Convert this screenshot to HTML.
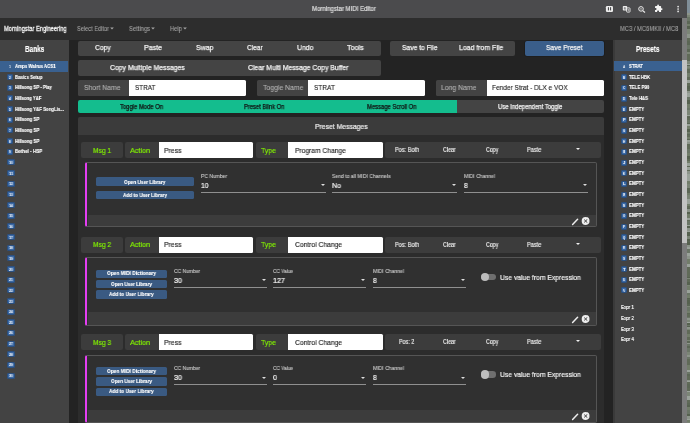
<!DOCTYPE html>
<html><head><meta charset="utf-8">
<style>
*{box-sizing:border-box;margin:0;padding:0}
html,body{width:690px;height:423px;overflow:hidden;background:#232323;font-family:"Liberation Sans",sans-serif;color:#fff;position:relative}
.a{position:absolute}
.t{position:absolute;white-space:nowrap;line-height:1;transform-origin:0 0;will-change:transform}
</style></head><body>
<div class="a" style="left:0.00px;top:0.00px;width:687.00px;height:17.70px;background:#4b4b4d;"></div>
<div class="a" style="left:687.00px;top:0.00px;width:3.00px;height:423.00px;background:#66715f;"></div>
<div class="a" style="left:687.00px;top:0.00px;width:3.00px;height:13.00px;background:#7f8e98;"></div>
<div class="a" style="left:687.00px;top:13.00px;width:3.00px;height:1.50px;background:#8c948a;"></div>
<div class="a" style="left:687.00px;top:14.50px;width:3.00px;height:2.00px;background:#7b8576;"></div>
<div class="a" style="left:687.00px;top:16.50px;width:3.00px;height:4.00px;background:#6a7566;"></div>
<div class="a" style="left:687.00px;top:20.50px;width:3.00px;height:3.00px;background:#5b6655;"></div>
<div class="a" style="left:687.00px;top:23.50px;width:3.00px;height:2.50px;background:#727d6a;"></div>
<div class="a" style="left:687.00px;top:26.00px;width:3.00px;height:3.00px;background:#56614f;"></div>
<div class="a" style="left:687.00px;top:29.00px;width:3.00px;height:1.50px;background:#7b8576;"></div>
<div class="a" style="left:687.00px;top:30.50px;width:3.00px;height:3.00px;background:#7b8576;"></div>
<div class="a" style="left:687.00px;top:33.50px;width:3.00px;height:2.50px;background:#8c948a;"></div>
<div class="a" style="left:687.00px;top:36.00px;width:3.00px;height:1.50px;background:#8c948a;"></div>
<div class="a" style="left:687.00px;top:37.50px;width:3.00px;height:3.00px;background:#606a58;"></div>
<div class="a" style="left:687.00px;top:40.50px;width:3.00px;height:4.00px;background:#5b6655;"></div>
<div class="a" style="left:687.00px;top:44.50px;width:3.00px;height:4.00px;background:#6a7566;"></div>
<div class="a" style="left:687.00px;top:48.50px;width:3.00px;height:1.50px;background:#5b6655;"></div>
<div class="a" style="left:687.00px;top:50.00px;width:3.00px;height:2.00px;background:#5b6655;"></div>
<div class="a" style="left:687.00px;top:52.00px;width:3.00px;height:2.00px;background:#7b8576;"></div>
<div class="a" style="left:687.00px;top:54.00px;width:3.00px;height:3.00px;background:#606a58;"></div>
<div class="a" style="left:687.00px;top:57.00px;width:3.00px;height:4.00px;background:#606a58;"></div>
<div class="a" style="left:687.00px;top:61.00px;width:3.00px;height:2.50px;background:#7b8576;"></div>
<div class="a" style="left:687.00px;top:63.50px;width:3.00px;height:1.50px;background:#9aa29a;"></div>
<div class="a" style="left:687.00px;top:65.00px;width:3.00px;height:1.00px;background:#5b6655;"></div>
<div class="a" style="left:687.00px;top:66.00px;width:3.00px;height:1.50px;background:#7b8576;"></div>
<div class="a" style="left:687.00px;top:67.50px;width:3.00px;height:1.50px;background:#727d6a;"></div>
<div class="a" style="left:687.00px;top:69.00px;width:3.00px;height:4.00px;background:#606a58;"></div>
<div class="a" style="left:687.00px;top:73.00px;width:3.00px;height:4.00px;background:#727d6a;"></div>
<div class="a" style="left:687.00px;top:77.00px;width:3.00px;height:2.50px;background:#606a58;"></div>
<div class="a" style="left:687.00px;top:79.50px;width:3.00px;height:3.00px;background:#9aa29a;"></div>
<div class="a" style="left:687.00px;top:82.50px;width:3.00px;height:3.00px;background:#606a58;"></div>
<div class="a" style="left:687.00px;top:85.50px;width:3.00px;height:3.00px;background:#56614f;"></div>
<div class="a" style="left:687.00px;top:88.50px;width:3.00px;height:2.00px;background:#5b6655;"></div>
<div class="a" style="left:687.00px;top:90.50px;width:3.00px;height:2.00px;background:#8c948a;"></div>
<div class="a" style="left:687.00px;top:92.50px;width:3.00px;height:4.00px;background:#9aa29a;"></div>
<div class="a" style="left:687.00px;top:96.50px;width:3.00px;height:3.00px;background:#6a7566;"></div>
<div class="a" style="left:687.00px;top:99.50px;width:3.00px;height:4.00px;background:#56614f;"></div>
<div class="a" style="left:687.00px;top:103.50px;width:3.00px;height:4.00px;background:#727d6a;"></div>
<div class="a" style="left:687.00px;top:107.50px;width:3.00px;height:2.00px;background:#6a7566;"></div>
<div class="a" style="left:687.00px;top:109.50px;width:3.00px;height:1.00px;background:#7b8576;"></div>
<div class="a" style="left:687.00px;top:110.50px;width:3.00px;height:4.00px;background:#7b8576;"></div>
<div class="a" style="left:687.00px;top:114.50px;width:3.00px;height:1.00px;background:#9aa29a;"></div>
<div class="a" style="left:687.00px;top:115.50px;width:3.00px;height:1.00px;background:#606a58;"></div>
<div class="a" style="left:687.00px;top:116.50px;width:3.00px;height:1.50px;background:#5b6655;"></div>
<div class="a" style="left:687.00px;top:118.00px;width:3.00px;height:2.00px;background:#606a58;"></div>
<div class="a" style="left:687.00px;top:120.00px;width:3.00px;height:2.50px;background:#6a7566;"></div>
<div class="a" style="left:687.00px;top:122.50px;width:3.00px;height:1.00px;background:#5b6655;"></div>
<div class="a" style="left:687.00px;top:123.50px;width:3.00px;height:2.50px;background:#9aa29a;"></div>
<div class="a" style="left:687.00px;top:126.00px;width:3.00px;height:3.00px;background:#727d6a;"></div>
<div class="a" style="left:687.00px;top:129.00px;width:3.00px;height:3.00px;background:#56614f;"></div>
<div class="a" style="left:687.00px;top:132.00px;width:3.00px;height:1.00px;background:#727d6a;"></div>
<div class="a" style="left:687.00px;top:133.00px;width:3.00px;height:1.00px;background:#6a7566;"></div>
<div class="a" style="left:687.00px;top:134.00px;width:3.00px;height:1.00px;background:#5b6655;"></div>
<div class="a" style="left:687.00px;top:135.00px;width:3.00px;height:1.50px;background:#606a58;"></div>
<div class="a" style="left:687.00px;top:136.50px;width:3.00px;height:2.00px;background:#727d6a;"></div>
<div class="a" style="left:687.00px;top:138.50px;width:3.00px;height:1.50px;background:#5b6655;"></div>
<div class="a" style="left:687.00px;top:140.00px;width:3.00px;height:2.00px;background:#9aa29a;"></div>
<div class="a" style="left:687.00px;top:142.00px;width:3.00px;height:2.00px;background:#8c948a;"></div>
<div class="a" style="left:687.00px;top:144.00px;width:3.00px;height:2.50px;background:#606a58;"></div>
<div class="a" style="left:687.00px;top:146.50px;width:3.00px;height:2.50px;background:#606a58;"></div>
<div class="a" style="left:687.00px;top:149.00px;width:3.00px;height:4.00px;background:#6a7566;"></div>
<div class="a" style="left:687.00px;top:153.00px;width:3.00px;height:3.00px;background:#727d6a;"></div>
<div class="a" style="left:687.00px;top:156.00px;width:3.00px;height:2.50px;background:#56614f;"></div>
<div class="a" style="left:687.00px;top:158.50px;width:3.00px;height:2.00px;background:#606a58;"></div>
<div class="a" style="left:687.00px;top:160.50px;width:3.00px;height:2.00px;background:#727d6a;"></div>
<div class="a" style="left:687.00px;top:162.50px;width:3.00px;height:3.00px;background:#9aa29a;"></div>
<div class="a" style="left:687.00px;top:165.50px;width:3.00px;height:1.00px;background:#606a58;"></div>
<div class="a" style="left:687.00px;top:166.50px;width:3.00px;height:3.00px;background:#9aa29a;"></div>
<div class="a" style="left:687.00px;top:169.50px;width:3.00px;height:1.00px;background:#606a58;"></div>
<div class="a" style="left:687.00px;top:170.50px;width:3.00px;height:3.00px;background:#8c948a;"></div>
<div class="a" style="left:687.00px;top:173.50px;width:3.00px;height:1.00px;background:#9aa29a;"></div>
<div class="a" style="left:687.00px;top:174.50px;width:3.00px;height:2.50px;background:#9aa29a;"></div>
<div class="a" style="left:687.00px;top:177.00px;width:3.00px;height:4.00px;background:#9aa29a;"></div>
<div class="a" style="left:687.00px;top:181.00px;width:3.00px;height:3.00px;background:#727d6a;"></div>
<div class="a" style="left:687.00px;top:184.00px;width:3.00px;height:4.00px;background:#7b8576;"></div>
<div class="a" style="left:687.00px;top:188.00px;width:3.00px;height:1.00px;background:#5b6655;"></div>
<div class="a" style="left:687.00px;top:189.00px;width:3.00px;height:4.00px;background:#5b6655;"></div>
<div class="a" style="left:687.00px;top:193.00px;width:3.00px;height:2.00px;background:#727d6a;"></div>
<div class="a" style="left:687.00px;top:195.00px;width:3.00px;height:4.00px;background:#7b8576;"></div>
<div class="a" style="left:687.00px;top:199.00px;width:3.00px;height:2.00px;background:#9aa29a;"></div>
<div class="a" style="left:687.00px;top:201.00px;width:3.00px;height:1.50px;background:#9aa29a;"></div>
<div class="a" style="left:687.00px;top:202.50px;width:3.00px;height:1.50px;background:#9aa29a;"></div>
<div class="a" style="left:687.00px;top:204.00px;width:3.00px;height:2.00px;background:#727d6a;"></div>
<div class="a" style="left:687.00px;top:206.00px;width:3.00px;height:2.00px;background:#606a58;"></div>
<div class="a" style="left:687.00px;top:208.00px;width:3.00px;height:1.00px;background:#5b6655;"></div>
<div class="a" style="left:687.00px;top:209.00px;width:3.00px;height:3.00px;background:#8c948a;"></div>
<div class="a" style="left:687.00px;top:212.00px;width:3.00px;height:2.00px;background:#56614f;"></div>
<div class="a" style="left:687.00px;top:214.00px;width:3.00px;height:4.00px;background:#727d6a;"></div>
<div class="a" style="left:687.00px;top:218.00px;width:3.00px;height:1.50px;background:#9aa29a;"></div>
<div class="a" style="left:687.00px;top:219.50px;width:3.00px;height:1.50px;background:#606a58;"></div>
<div class="a" style="left:687.00px;top:221.00px;width:3.00px;height:4.00px;background:#6a7566;"></div>
<div class="a" style="left:687.00px;top:225.00px;width:3.00px;height:1.00px;background:#9aa29a;"></div>
<div class="a" style="left:687.00px;top:226.00px;width:3.00px;height:2.00px;background:#56614f;"></div>
<div class="a" style="left:687.00px;top:228.00px;width:3.00px;height:2.50px;background:#8c948a;"></div>
<div class="a" style="left:687.00px;top:230.50px;width:3.00px;height:1.00px;background:#9aa29a;"></div>
<div class="a" style="left:687.00px;top:231.50px;width:3.00px;height:4.00px;background:#56614f;"></div>
<div class="a" style="left:687.00px;top:235.50px;width:3.00px;height:3.00px;background:#7b8576;"></div>
<div class="a" style="left:687.00px;top:238.50px;width:3.00px;height:2.00px;background:#56614f;"></div>
<div class="a" style="left:687.00px;top:240.50px;width:3.00px;height:1.00px;background:#5b6655;"></div>
<div class="a" style="left:687.00px;top:241.50px;width:3.00px;height:3.00px;background:#56614f;"></div>
<div class="a" style="left:687.00px;top:244.50px;width:3.00px;height:2.00px;background:#8c948a;"></div>
<div class="a" style="left:687.00px;top:246.50px;width:3.00px;height:2.00px;background:#9aa29a;"></div>
<div class="a" style="left:687.00px;top:248.50px;width:3.00px;height:4.00px;background:#6a7566;"></div>
<div class="a" style="left:687.00px;top:252.50px;width:3.00px;height:3.00px;background:#9aa29a;"></div>
<div class="a" style="left:687.00px;top:255.50px;width:3.00px;height:3.00px;background:#8c948a;"></div>
<div class="a" style="left:687.00px;top:258.50px;width:3.00px;height:2.50px;background:#727d6a;"></div>
<div class="a" style="left:687.00px;top:261.00px;width:3.00px;height:3.00px;background:#727d6a;"></div>
<div class="a" style="left:687.00px;top:264.00px;width:3.00px;height:2.50px;background:#9aa29a;"></div>
<div class="a" style="left:687.00px;top:266.50px;width:3.00px;height:4.00px;background:#606a58;"></div>
<div class="a" style="left:687.00px;top:270.50px;width:3.00px;height:2.00px;background:#606a58;"></div>
<div class="a" style="left:687.00px;top:272.50px;width:3.00px;height:3.00px;background:#606a58;"></div>
<div class="a" style="left:687.00px;top:275.50px;width:3.00px;height:1.00px;background:#606a58;"></div>
<div class="a" style="left:687.00px;top:276.50px;width:3.00px;height:1.50px;background:#56614f;"></div>
<div class="a" style="left:687.00px;top:278.00px;width:3.00px;height:1.00px;background:#7b8576;"></div>
<div class="a" style="left:687.00px;top:279.00px;width:3.00px;height:3.00px;background:#606a58;"></div>
<div class="a" style="left:687.00px;top:282.00px;width:3.00px;height:3.00px;background:#56614f;"></div>
<div class="a" style="left:687.00px;top:285.00px;width:3.00px;height:1.00px;background:#7b8576;"></div>
<div class="a" style="left:687.00px;top:286.00px;width:3.00px;height:4.00px;background:#727d6a;"></div>
<div class="a" style="left:687.00px;top:290.00px;width:3.00px;height:3.00px;background:#9aa29a;"></div>
<div class="a" style="left:687.00px;top:293.00px;width:3.00px;height:1.50px;background:#6a7566;"></div>
<div class="a" style="left:687.00px;top:294.50px;width:3.00px;height:3.00px;background:#727d6a;"></div>
<div class="a" style="left:687.00px;top:297.50px;width:3.00px;height:1.00px;background:#56614f;"></div>
<div class="a" style="left:687.00px;top:298.50px;width:3.00px;height:1.00px;background:#5b6655;"></div>
<div class="a" style="left:687.00px;top:299.50px;width:3.00px;height:4.00px;background:#56614f;"></div>
<div class="a" style="left:687.00px;top:303.50px;width:3.00px;height:2.50px;background:#5b6655;"></div>
<div class="a" style="left:687.00px;top:306.00px;width:3.00px;height:1.00px;background:#7b8576;"></div>
<div class="a" style="left:687.00px;top:307.00px;width:3.00px;height:4.00px;background:#6a7566;"></div>
<div class="a" style="left:687.00px;top:311.00px;width:3.00px;height:1.50px;background:#727d6a;"></div>
<div class="a" style="left:687.00px;top:312.50px;width:3.00px;height:1.50px;background:#5b6655;"></div>
<div class="a" style="left:687.00px;top:314.00px;width:3.00px;height:3.00px;background:#606a58;"></div>
<div class="a" style="left:687.00px;top:317.00px;width:3.00px;height:1.00px;background:#6a7566;"></div>
<div class="a" style="left:687.00px;top:318.00px;width:3.00px;height:2.00px;background:#8c948a;"></div>
<div class="a" style="left:687.00px;top:320.00px;width:3.00px;height:2.00px;background:#7b8576;"></div>
<div class="a" style="left:687.00px;top:322.00px;width:3.00px;height:1.00px;background:#9aa29a;"></div>
<div class="a" style="left:687.00px;top:323.00px;width:3.00px;height:1.50px;background:#56614f;"></div>
<div class="a" style="left:687.00px;top:324.50px;width:3.00px;height:1.00px;background:#6a7566;"></div>
<div class="a" style="left:687.00px;top:325.50px;width:3.00px;height:1.50px;background:#56614f;"></div>
<div class="a" style="left:687.00px;top:327.00px;width:3.00px;height:2.00px;background:#8c948a;"></div>
<div class="a" style="left:687.00px;top:329.00px;width:3.00px;height:1.00px;background:#7b8576;"></div>
<div class="a" style="left:687.00px;top:330.00px;width:3.00px;height:4.00px;background:#606a58;"></div>
<div class="a" style="left:687.00px;top:334.00px;width:3.00px;height:1.00px;background:#727d6a;"></div>
<div class="a" style="left:687.00px;top:335.00px;width:3.00px;height:1.50px;background:#727d6a;"></div>
<div class="a" style="left:687.00px;top:336.50px;width:3.00px;height:3.00px;background:#606a58;"></div>
<div class="a" style="left:687.00px;top:339.50px;width:3.00px;height:1.00px;background:#7b8576;"></div>
<div class="a" style="left:687.00px;top:340.50px;width:3.00px;height:2.00px;background:#5b6655;"></div>
<div class="a" style="left:687.00px;top:342.50px;width:3.00px;height:1.00px;background:#8c948a;"></div>
<div class="a" style="left:687.00px;top:343.50px;width:3.00px;height:1.00px;background:#6a7566;"></div>
<div class="a" style="left:687.00px;top:344.50px;width:3.00px;height:1.00px;background:#6a7566;"></div>
<div class="a" style="left:687.00px;top:345.50px;width:3.00px;height:2.50px;background:#5b6655;"></div>
<div class="a" style="left:687.00px;top:348.00px;width:3.00px;height:4.00px;background:#6a7566;"></div>
<div class="a" style="left:687.00px;top:352.00px;width:3.00px;height:3.00px;background:#7b8576;"></div>
<div class="a" style="left:687.00px;top:355.00px;width:3.00px;height:2.00px;background:#8c948a;"></div>
<div class="a" style="left:687.00px;top:357.00px;width:3.00px;height:2.00px;background:#6a7566;"></div>
<div class="a" style="left:687.00px;top:359.00px;width:3.00px;height:2.00px;background:#606a58;"></div>
<div class="a" style="left:687.00px;top:361.00px;width:3.00px;height:4.00px;background:#606a58;"></div>
<div class="a" style="left:687.00px;top:365.00px;width:3.00px;height:3.00px;background:#727d6a;"></div>
<div class="a" style="left:687.00px;top:368.00px;width:3.00px;height:2.00px;background:#727d6a;"></div>
<div class="a" style="left:687.00px;top:370.00px;width:3.00px;height:1.50px;background:#9aa29a;"></div>
<div class="a" style="left:687.00px;top:371.50px;width:3.00px;height:2.50px;background:#6a7566;"></div>
<div class="a" style="left:687.00px;top:374.00px;width:3.00px;height:1.50px;background:#5b6655;"></div>
<div class="a" style="left:687.00px;top:375.50px;width:3.00px;height:4.00px;background:#606a58;"></div>
<div class="a" style="left:687.00px;top:379.50px;width:3.00px;height:1.00px;background:#8c948a;"></div>
<div class="a" style="left:687.00px;top:380.50px;width:3.00px;height:1.00px;background:#9aa29a;"></div>
<div class="a" style="left:687.00px;top:381.50px;width:3.00px;height:2.50px;background:#606a58;"></div>
<div class="a" style="left:687.00px;top:384.00px;width:3.00px;height:4.00px;background:#5b6655;"></div>
<div class="a" style="left:687.00px;top:388.00px;width:3.00px;height:3.00px;background:#606a58;"></div>
<div class="a" style="left:687.00px;top:391.00px;width:3.00px;height:1.00px;background:#9aa29a;"></div>
<div class="a" style="left:687.00px;top:392.00px;width:3.00px;height:4.00px;background:#7b8576;"></div>
<div class="a" style="left:687.00px;top:396.00px;width:3.00px;height:4.00px;background:#9aa29a;"></div>
<div class="a" style="left:687.00px;top:400.00px;width:3.00px;height:2.50px;background:#606a58;"></div>
<div class="a" style="left:687.00px;top:402.50px;width:3.00px;height:2.50px;background:#5b6655;"></div>
<div class="a" style="left:687.00px;top:405.00px;width:3.00px;height:1.50px;background:#56614f;"></div>
<div class="a" style="left:687.00px;top:406.50px;width:3.00px;height:3.00px;background:#727d6a;"></div>
<div class="a" style="left:687.00px;top:409.50px;width:3.00px;height:4.00px;background:#6a7566;"></div>
<div class="a" style="left:687.00px;top:413.50px;width:3.00px;height:2.50px;background:#56614f;"></div>
<div class="a" style="left:687.00px;top:416.00px;width:3.00px;height:2.50px;background:#8c948a;"></div>
<div class="a" style="left:687.00px;top:418.50px;width:3.00px;height:1.00px;background:#9aa29a;"></div>
<div class="a" style="left:687.00px;top:419.50px;width:3.00px;height:2.00px;background:#727d6a;"></div>
<div class="a" style="left:687.00px;top:421.50px;width:3.00px;height:1.00px;background:#7b8576;"></div>
<div class="a" style="left:687.00px;top:422.50px;width:3.00px;height:4.00px;background:#6a7566;"></div>
<div class="a" style="left:0.00px;top:17.70px;width:682.00px;height:21.90px;background:#2d2d2d;"></div>
<div class="a" style="left:682.00px;top:17.70px;width:5.00px;height:405.30px;background:#7c7c7c;"></div>
<div class="a" style="left:682.00px;top:60.40px;width:5.00px;height:182.20px;background:#c2c2c2;"></div>
<div class="a" style="left:0.00px;top:39.60px;width:68.70px;height:383.40px;background:#434343;"></div>
<div class="a" style="left:68.70px;top:39.60px;width:544.00px;height:383.40px;background:#232323;"></div>
<div class="a" style="left:612.70px;top:39.60px;width:69.30px;height:383.40px;background:#434343;"></div>
<div class="a" style="left:612.70px;top:39.60px;width:2.60px;height:383.40px;background:#3a3a3a;"></div>
<div class="t" style="left:311.50px;top:6px;font-size:6.5px;color:#e6e6e6;transform:scaleX(0.930);-webkit-text-stroke:0.15px currentColor;">Morningstar MIDI Editor</div>
<svg class="a" style="left:600px;top:2px" width="82" height="14" viewBox="600 2 82 14">
<rect x="605.9" y="6" width="7.1" height="5.9" rx="1.2" fill="#ececec"/>
<rect x="607.9" y="7.2" width="1.1" height="3.2" fill="#4b4b4d"/><rect x="610" y="7.2" width="1.1" height="3.2" fill="#4b4b4d"/>
<rect x="622.8" y="6" width="4.4" height="4.6" rx="0.8" fill="#ececec"/>
<path d="M624.3 7.6 h1.3 M624.3 7.6 v1.5 h1.4 v-0.8" stroke="#4b4b4d" stroke-width="0.6" fill="none"/>
<rect x="626.6" y="7.9" width="3.4" height="4.2" rx="0.6" fill="none" stroke="#ececec" stroke-width="0.9"/>
<line x1="628.3" y1="9" x2="628.3" y2="11.2" stroke="#ececec" stroke-width="0.7"/>
<circle cx="641" cy="8.9" r="2.3" fill="none" stroke="#ececec" stroke-width="1"/>
<line x1="642.7" y1="10.6" x2="645" y2="12.5" stroke="#ececec" stroke-width="1.2"/>
<line x1="639.9" y1="8.9" x2="642.1" y2="8.9" stroke="#ececec" stroke-width="0.7"/>
<g transform="translate(654.3,4.2) scale(0.36)"><path d="M20.5 11H19V7c0-1.1-.9-2-2-2h-4V3.5C13 2.12 11.88 1 10.5 1S8 2.12 8 3.5V5H4c-1.1 0-1.99.9-1.99 2v3.8H3.5c1.49 0 2.7 1.21 2.7 2.7s-1.21 2.7-2.7 2.7H2V20c0 1.1.9 2 2 2h3.8v-1.5c0-1.490 1.21-2.7 2.7-2.7 1.49 0 2.7 1.21 2.7 2.7V22H17c1.1 0 2-.9 2-2v-4h1.5c1.38 0 2.5-1.12 2.5-2.5S21.88 11 20.5 11z" fill="#f4f4f4"/></g>
<circle cx="678.1" cy="6.6" r="0.85" fill="#ececec"/><circle cx="678.1" cy="9" r="0.85" fill="#ececec"/><circle cx="678.1" cy="11.4" r="0.85" fill="#ececec"/>
</svg>
<div class="t" style="left:4.10px;top:25px;font-size:7.0px;color:#f2f2f2;transform:scaleX(0.821);-webkit-text-stroke:0.3px currentColor;">Morningstar Engineering</div>
<div class="t" style="left:77.00px;top:25px;font-size:7.0px;color:#a2a2a2;transform:scaleX(0.806);-webkit-text-stroke:0.1px currentColor;">Select Editor</div>
<div class="t" style="left:129.00px;top:25px;font-size:7.0px;color:#a2a2a2;transform:scaleX(0.830);-webkit-text-stroke:0.1px currentColor;">Settings</div>
<div class="t" style="left:170.30px;top:25px;font-size:7.0px;color:#a2a2a2;transform:scaleX(0.826);-webkit-text-stroke:0.1px currentColor;">Help</div>
<svg class="a" style="left:110.10px;top:27px" width="4" height="3" viewBox="0 0 4 3"><path d="M0.2 0.6 L3.8 0.6 L2 2.6 Z" fill="#a8a8a8"/></svg>
<svg class="a" style="left:151.10px;top:27px" width="4" height="3" viewBox="0 0 4 3"><path d="M0.2 0.6 L3.8 0.6 L2 2.6 Z" fill="#a8a8a8"/></svg>
<svg class="a" style="left:183.20px;top:27px" width="4" height="3" viewBox="0 0 4 3"><path d="M0.2 0.6 L3.8 0.6 L2 2.6 Z" fill="#a8a8a8"/></svg>
<div class="t" style="left:619.70px;top:25px;font-size:7.0px;color:#a2a2a2;transform:scaleX(0.828);-webkit-text-stroke:0.1px currentColor;">MC3 / MC6MKII / MC8</div>
<div class="t" style="left:24.50px;top:45px;font-size:8.75px;color:#fff;font-weight:bold;transform:scaleX(0.735);-webkit-text-stroke:0.2px currentColor;">Banks</div>
<div class="a" style="left:0.00px;top:60.80px;width:68.20px;height:10.80px;background:#3a6190;"></div>
<div class="t" style="left:9.30px;top:65px;font-size:4.25px;color:#fff;font-weight:bold;transform:scaleX(0.762);">1</div>
<div class="t" style="left:14.90px;top:64px;font-size:5.5px;color:#fff;font-weight:bold;transform:scaleX(0.797);-webkit-text-stroke:0.15px currentColor;">Amps Walrus ACS1</div>
<div class="a" style="left:7.00px;top:74.16px;width:6.40px;height:6.00px;background:#3d6aa5;border-radius:2.2px;box-shadow:inset 0 0 0 0.8px #264a78"></div>
<div class="t" style="left:9.30px;top:76px;font-size:4.25px;color:#fff;font-weight:bold;transform:scaleX(0.762);">2</div>
<div class="t" style="left:14.90px;top:75px;font-size:5.5px;color:#fff;font-weight:bold;transform:scaleX(0.790);-webkit-text-stroke:0.15px currentColor;">Basics Setup</div>
<div class="a" style="left:7.00px;top:84.82px;width:6.40px;height:6.00px;background:#3d6aa5;border-radius:2.2px;box-shadow:inset 0 0 0 0.8px #264a78"></div>
<div class="t" style="left:9.30px;top:86px;font-size:4.25px;color:#fff;font-weight:bold;transform:scaleX(0.762);">3</div>
<div class="t" style="left:14.90px;top:85px;font-size:5.5px;color:#fff;font-weight:bold;transform:scaleX(0.791);-webkit-text-stroke:0.15px currentColor;">Hillsong SP - Play</div>
<div class="a" style="left:7.00px;top:95.48px;width:6.40px;height:6.00px;background:#3d6aa5;border-radius:2.2px;box-shadow:inset 0 0 0 0.8px #264a78"></div>
<div class="t" style="left:9.30px;top:97px;font-size:4.25px;color:#fff;font-weight:bold;transform:scaleX(0.762);">4</div>
<div class="t" style="left:14.90px;top:96px;font-size:5.5px;color:#fff;font-weight:bold;transform:scaleX(0.777);-webkit-text-stroke:0.15px currentColor;">Hillsong Y&amp;F</div>
<div class="a" style="left:7.00px;top:106.14px;width:6.40px;height:6.00px;background:#3d6aa5;border-radius:2.2px;box-shadow:inset 0 0 0 0.8px #264a78"></div>
<div class="t" style="left:9.30px;top:108px;font-size:4.25px;color:#fff;font-weight:bold;transform:scaleX(0.762);">5</div>
<div class="t" style="left:14.90px;top:107px;font-size:5.5px;color:#fff;font-weight:bold;transform:scaleX(0.788);-webkit-text-stroke:0.15px currentColor;">Hillsong Y&amp;F SongLis...</div>
<div class="a" style="left:7.00px;top:116.80px;width:6.40px;height:6.00px;background:#3d6aa5;border-radius:2.2px;box-shadow:inset 0 0 0 0.8px #264a78"></div>
<div class="t" style="left:9.30px;top:118px;font-size:4.25px;color:#fff;font-weight:bold;transform:scaleX(0.762);">6</div>
<div class="t" style="left:14.90px;top:117px;font-size:5.5px;color:#fff;font-weight:bold;transform:scaleX(0.795);-webkit-text-stroke:0.15px currentColor;">Hillsong SP</div>
<div class="a" style="left:7.00px;top:127.46px;width:6.40px;height:6.00px;background:#3d6aa5;border-radius:2.2px;box-shadow:inset 0 0 0 0.8px #264a78"></div>
<div class="t" style="left:9.30px;top:129px;font-size:4.25px;color:#fff;font-weight:bold;transform:scaleX(0.762);">7</div>
<div class="t" style="left:14.90px;top:128px;font-size:5.5px;color:#fff;font-weight:bold;transform:scaleX(0.795);-webkit-text-stroke:0.15px currentColor;">Hillsong SP</div>
<div class="a" style="left:7.00px;top:138.12px;width:6.40px;height:6.00px;background:#3d6aa5;border-radius:2.2px;box-shadow:inset 0 0 0 0.8px #264a78"></div>
<div class="t" style="left:9.30px;top:140px;font-size:4.25px;color:#fff;font-weight:bold;transform:scaleX(0.762);">8</div>
<div class="t" style="left:14.90px;top:139px;font-size:5.5px;color:#fff;font-weight:bold;transform:scaleX(0.795);-webkit-text-stroke:0.15px currentColor;">Hillsong SP</div>
<div class="a" style="left:7.00px;top:148.78px;width:6.40px;height:6.00px;background:#3d6aa5;border-radius:2.2px;box-shadow:inset 0 0 0 0.8px #264a78"></div>
<div class="t" style="left:9.30px;top:150px;font-size:4.25px;color:#fff;font-weight:bold;transform:scaleX(0.762);">9</div>
<div class="t" style="left:14.90px;top:149px;font-size:5.5px;color:#fff;font-weight:bold;transform:scaleX(0.827);-webkit-text-stroke:0.15px currentColor;">Bethel - HSP</div>
<div class="a" style="left:7.00px;top:159.44px;width:8.40px;height:6.00px;background:#3d6aa5;border-radius:2.2px;box-shadow:inset 0 0 0 0.8px #264a78"></div>
<div class="t" style="left:9.20px;top:161px;font-size:4.25px;color:#fff;font-weight:bold;transform:scaleX(0.846);">10</div>
<div class="a" style="left:7.00px;top:170.10px;width:8.40px;height:6.00px;background:#3d6aa5;border-radius:2.2px;box-shadow:inset 0 0 0 0.8px #264a78"></div>
<div class="t" style="left:9.20px;top:172px;font-size:4.25px;color:#fff;font-weight:bold;transform:scaleX(0.890);">11</div>
<div class="a" style="left:7.00px;top:180.76px;width:8.40px;height:6.00px;background:#3d6aa5;border-radius:2.2px;box-shadow:inset 0 0 0 0.8px #264a78"></div>
<div class="t" style="left:9.20px;top:182px;font-size:4.25px;color:#fff;font-weight:bold;transform:scaleX(0.846);">12</div>
<div class="a" style="left:7.00px;top:191.42px;width:8.40px;height:6.00px;background:#3d6aa5;border-radius:2.2px;box-shadow:inset 0 0 0 0.8px #264a78"></div>
<div class="t" style="left:9.20px;top:193px;font-size:4.25px;color:#fff;font-weight:bold;transform:scaleX(0.846);">13</div>
<div class="a" style="left:7.00px;top:202.08px;width:8.40px;height:6.00px;background:#3d6aa5;border-radius:2.2px;box-shadow:inset 0 0 0 0.8px #264a78"></div>
<div class="t" style="left:9.20px;top:204px;font-size:4.25px;color:#fff;font-weight:bold;transform:scaleX(0.846);">14</div>
<div class="a" style="left:7.00px;top:212.74px;width:8.40px;height:6.00px;background:#3d6aa5;border-radius:2.2px;box-shadow:inset 0 0 0 0.8px #264a78"></div>
<div class="t" style="left:9.20px;top:214px;font-size:4.25px;color:#fff;font-weight:bold;transform:scaleX(0.846);">15</div>
<div class="a" style="left:7.00px;top:223.40px;width:8.40px;height:6.00px;background:#3d6aa5;border-radius:2.2px;box-shadow:inset 0 0 0 0.8px #264a78"></div>
<div class="t" style="left:9.20px;top:225px;font-size:4.25px;color:#fff;font-weight:bold;transform:scaleX(0.846);">16</div>
<div class="a" style="left:7.00px;top:234.06px;width:8.40px;height:6.00px;background:#3d6aa5;border-radius:2.2px;box-shadow:inset 0 0 0 0.8px #264a78"></div>
<div class="t" style="left:9.20px;top:236px;font-size:4.25px;color:#fff;font-weight:bold;transform:scaleX(0.846);">17</div>
<div class="a" style="left:7.00px;top:244.72px;width:8.40px;height:6.00px;background:#3d6aa5;border-radius:2.2px;box-shadow:inset 0 0 0 0.8px #264a78"></div>
<div class="t" style="left:9.20px;top:246px;font-size:4.25px;color:#fff;font-weight:bold;transform:scaleX(0.846);">18</div>
<div class="a" style="left:7.00px;top:255.38px;width:8.40px;height:6.00px;background:#3d6aa5;border-radius:2.2px;box-shadow:inset 0 0 0 0.8px #264a78"></div>
<div class="t" style="left:9.20px;top:257px;font-size:4.25px;color:#fff;font-weight:bold;transform:scaleX(0.846);">19</div>
<div class="a" style="left:7.00px;top:266.04px;width:8.40px;height:6.00px;background:#3d6aa5;border-radius:2.2px;box-shadow:inset 0 0 0 0.8px #264a78"></div>
<div class="t" style="left:9.20px;top:268px;font-size:4.25px;color:#fff;font-weight:bold;transform:scaleX(0.846);">20</div>
<div class="a" style="left:7.00px;top:276.70px;width:8.40px;height:6.00px;background:#3d6aa5;border-radius:2.2px;box-shadow:inset 0 0 0 0.8px #264a78"></div>
<div class="t" style="left:9.20px;top:278px;font-size:4.25px;color:#fff;font-weight:bold;transform:scaleX(0.846);">21</div>
<div class="a" style="left:7.00px;top:287.36px;width:8.40px;height:6.00px;background:#3d6aa5;border-radius:2.2px;box-shadow:inset 0 0 0 0.8px #264a78"></div>
<div class="t" style="left:9.20px;top:289px;font-size:4.25px;color:#fff;font-weight:bold;transform:scaleX(0.846);">22</div>
<div class="a" style="left:7.00px;top:298.02px;width:8.40px;height:6.00px;background:#3d6aa5;border-radius:2.2px;box-shadow:inset 0 0 0 0.8px #264a78"></div>
<div class="t" style="left:9.20px;top:300px;font-size:4.25px;color:#fff;font-weight:bold;transform:scaleX(0.846);">23</div>
<div class="a" style="left:7.00px;top:308.68px;width:8.40px;height:6.00px;background:#3d6aa5;border-radius:2.2px;box-shadow:inset 0 0 0 0.8px #264a78"></div>
<div class="t" style="left:9.20px;top:310px;font-size:4.25px;color:#fff;font-weight:bold;transform:scaleX(0.846);">24</div>
<div class="a" style="left:7.00px;top:319.34px;width:8.40px;height:6.00px;background:#3d6aa5;border-radius:2.2px;box-shadow:inset 0 0 0 0.8px #264a78"></div>
<div class="t" style="left:9.20px;top:321px;font-size:4.25px;color:#fff;font-weight:bold;transform:scaleX(0.846);">25</div>
<div class="a" style="left:7.00px;top:330.00px;width:8.40px;height:6.00px;background:#3d6aa5;border-radius:2.2px;box-shadow:inset 0 0 0 0.8px #264a78"></div>
<div class="t" style="left:9.20px;top:331px;font-size:4.25px;color:#fff;font-weight:bold;transform:scaleX(0.846);">26</div>
<div class="a" style="left:7.00px;top:340.66px;width:8.40px;height:6.00px;background:#3d6aa5;border-radius:2.2px;box-shadow:inset 0 0 0 0.8px #264a78"></div>
<div class="t" style="left:9.20px;top:342px;font-size:4.25px;color:#fff;font-weight:bold;transform:scaleX(0.846);">27</div>
<div class="a" style="left:7.00px;top:351.32px;width:8.40px;height:6.00px;background:#3d6aa5;border-radius:2.2px;box-shadow:inset 0 0 0 0.8px #264a78"></div>
<div class="t" style="left:9.20px;top:353px;font-size:4.25px;color:#fff;font-weight:bold;transform:scaleX(0.846);">28</div>
<div class="a" style="left:7.00px;top:361.98px;width:8.40px;height:6.00px;background:#3d6aa5;border-radius:2.2px;box-shadow:inset 0 0 0 0.8px #264a78"></div>
<div class="t" style="left:9.20px;top:363px;font-size:4.25px;color:#fff;font-weight:bold;transform:scaleX(0.846);">29</div>
<div class="a" style="left:7.00px;top:372.64px;width:8.40px;height:6.00px;background:#3d6aa5;border-radius:2.2px;box-shadow:inset 0 0 0 0.8px #264a78"></div>
<div class="t" style="left:9.20px;top:374px;font-size:4.25px;color:#fff;font-weight:bold;transform:scaleX(0.846);">30</div>
<div class="t" style="left:636.20px;top:45px;font-size:8.75px;color:#fff;font-weight:bold;transform:scaleX(0.746);-webkit-text-stroke:0.2px currentColor;">Presets</div>
<div class="a" style="left:613.80px;top:60.80px;width:68.20px;height:10.70px;background:#3a6190;"></div>
<div class="t" style="left:623.30px;top:65px;font-size:4.25px;color:#fff;font-weight:bold;transform:scaleX(0.717);">A</div>
<div class="t" style="left:629.00px;top:64px;font-size:5.5px;color:#fff;font-weight:bold;transform:scaleX(0.770);-webkit-text-stroke:0.15px currentColor;">STRAT</div>
<div class="a" style="left:620.90px;top:74.26px;width:6.20px;height:6.00px;background:#3d6aa5;border-radius:2.2px;box-shadow:inset 0 0 0 0.8px #264a78"></div>
<div class="t" style="left:623.30px;top:76px;font-size:4.25px;color:#fff;font-weight:bold;transform:scaleX(0.717);">B</div>
<div class="t" style="left:629.00px;top:75px;font-size:5.5px;color:#fff;font-weight:bold;transform:scaleX(0.764);-webkit-text-stroke:0.15px currentColor;">TELE HBK</div>
<div class="a" style="left:620.90px;top:84.92px;width:6.20px;height:6.00px;background:#3d6aa5;border-radius:2.2px;box-shadow:inset 0 0 0 0.8px #264a78"></div>
<div class="t" style="left:623.30px;top:86px;font-size:4.25px;color:#fff;font-weight:bold;transform:scaleX(0.717);">C</div>
<div class="t" style="left:629.00px;top:85px;font-size:5.5px;color:#fff;font-weight:bold;transform:scaleX(0.804);-webkit-text-stroke:0.15px currentColor;">TELE P90</div>
<div class="a" style="left:620.90px;top:95.58px;width:6.20px;height:6.00px;background:#3d6aa5;border-radius:2.2px;box-shadow:inset 0 0 0 0.8px #264a78"></div>
<div class="t" style="left:623.30px;top:97px;font-size:4.25px;color:#fff;font-weight:bold;transform:scaleX(0.717);">D</div>
<div class="t" style="left:629.00px;top:96px;font-size:5.5px;color:#fff;font-weight:bold;transform:scaleX(0.805);-webkit-text-stroke:0.15px currentColor;">Tele H&amp;S</div>
<div class="a" style="left:620.90px;top:106.24px;width:6.20px;height:6.00px;background:#3d6aa5;border-radius:2.2px;box-shadow:inset 0 0 0 0.8px #264a78"></div>
<div class="t" style="left:623.30px;top:108px;font-size:4.25px;color:#fff;font-weight:bold;transform:scaleX(0.776);">E</div>
<div class="t" style="left:629.00px;top:107px;font-size:5.5px;color:#fff;font-weight:bold;transform:scaleX(0.802);-webkit-text-stroke:0.15px currentColor;">EMPTY</div>
<div class="a" style="left:620.90px;top:116.90px;width:6.20px;height:6.00px;background:#3d6aa5;border-radius:2.2px;box-shadow:inset 0 0 0 0.8px #264a78"></div>
<div class="t" style="left:623.30px;top:118px;font-size:4.25px;color:#fff;font-weight:bold;transform:scaleX(0.847);">F</div>
<div class="t" style="left:629.00px;top:117px;font-size:5.5px;color:#fff;font-weight:bold;transform:scaleX(0.802);-webkit-text-stroke:0.15px currentColor;">EMPTY</div>
<div class="a" style="left:620.90px;top:127.56px;width:6.20px;height:6.00px;background:#3d6aa5;border-radius:2.2px;box-shadow:inset 0 0 0 0.8px #264a78"></div>
<div class="t" style="left:623.30px;top:129px;font-size:4.25px;color:#fff;font-weight:bold;transform:scaleX(0.665);">G</div>
<div class="t" style="left:629.00px;top:128px;font-size:5.5px;color:#fff;font-weight:bold;transform:scaleX(0.802);-webkit-text-stroke:0.15px currentColor;">EMPTY</div>
<div class="a" style="left:620.90px;top:138.22px;width:6.20px;height:6.00px;background:#3d6aa5;border-radius:2.2px;box-shadow:inset 0 0 0 0.8px #264a78"></div>
<div class="t" style="left:623.30px;top:140px;font-size:4.25px;color:#fff;font-weight:bold;transform:scaleX(0.717);">H</div>
<div class="t" style="left:629.00px;top:139px;font-size:5.5px;color:#fff;font-weight:bold;transform:scaleX(0.802);-webkit-text-stroke:0.15px currentColor;">EMPTY</div>
<div class="a" style="left:620.90px;top:148.88px;width:6.20px;height:6.00px;background:#3d6aa5;border-radius:2.2px;box-shadow:inset 0 0 0 0.8px #264a78"></div>
<div class="t" style="left:623.30px;top:150px;font-size:4.25px;color:#fff;font-weight:bold;transform:scaleX(1.862);">I</div>
<div class="t" style="left:629.00px;top:149px;font-size:5.5px;color:#fff;font-weight:bold;transform:scaleX(0.802);-webkit-text-stroke:0.15px currentColor;">EMPTY</div>
<div class="a" style="left:620.90px;top:159.54px;width:6.20px;height:6.00px;background:#3d6aa5;border-radius:2.2px;box-shadow:inset 0 0 0 0.8px #264a78"></div>
<div class="t" style="left:623.30px;top:161px;font-size:4.25px;color:#fff;font-weight:bold;transform:scaleX(0.931);">J</div>
<div class="t" style="left:629.00px;top:160px;font-size:5.5px;color:#fff;font-weight:bold;transform:scaleX(0.802);-webkit-text-stroke:0.15px currentColor;">EMPTY</div>
<div class="a" style="left:620.90px;top:170.20px;width:6.20px;height:6.00px;background:#3d6aa5;border-radius:2.2px;box-shadow:inset 0 0 0 0.8px #264a78"></div>
<div class="t" style="left:623.30px;top:172px;font-size:4.25px;color:#fff;font-weight:bold;transform:scaleX(0.717);">K</div>
<div class="t" style="left:629.00px;top:171px;font-size:5.5px;color:#fff;font-weight:bold;transform:scaleX(0.802);-webkit-text-stroke:0.15px currentColor;">EMPTY</div>
<div class="a" style="left:620.90px;top:180.86px;width:6.20px;height:6.00px;background:#3d6aa5;border-radius:2.2px;box-shadow:inset 0 0 0 0.8px #264a78"></div>
<div class="t" style="left:623.30px;top:182px;font-size:4.25px;color:#fff;font-weight:bold;transform:scaleX(0.847);">L</div>
<div class="t" style="left:629.00px;top:181px;font-size:5.5px;color:#fff;font-weight:bold;transform:scaleX(0.802);-webkit-text-stroke:0.15px currentColor;">EMPTY</div>
<div class="a" style="left:620.90px;top:191.52px;width:6.20px;height:6.00px;background:#3d6aa5;border-radius:2.2px;box-shadow:inset 0 0 0 0.8px #264a78"></div>
<div class="t" style="left:623.30px;top:193px;font-size:4.25px;color:#fff;font-weight:bold;transform:scaleX(0.621);">M</div>
<div class="t" style="left:629.00px;top:192px;font-size:5.5px;color:#fff;font-weight:bold;transform:scaleX(0.802);-webkit-text-stroke:0.15px currentColor;">EMPTY</div>
<div class="a" style="left:620.90px;top:202.18px;width:6.20px;height:6.00px;background:#3d6aa5;border-radius:2.2px;box-shadow:inset 0 0 0 0.8px #264a78"></div>
<div class="t" style="left:623.30px;top:204px;font-size:4.25px;color:#fff;font-weight:bold;transform:scaleX(0.717);">N</div>
<div class="t" style="left:629.00px;top:203px;font-size:5.5px;color:#fff;font-weight:bold;transform:scaleX(0.802);-webkit-text-stroke:0.15px currentColor;">EMPTY</div>
<div class="a" style="left:620.90px;top:212.84px;width:6.20px;height:6.00px;background:#3d6aa5;border-radius:2.2px;box-shadow:inset 0 0 0 0.8px #264a78"></div>
<div class="t" style="left:623.30px;top:214px;font-size:4.25px;color:#fff;font-weight:bold;transform:scaleX(0.665);">O</div>
<div class="t" style="left:629.00px;top:213px;font-size:5.5px;color:#fff;font-weight:bold;transform:scaleX(0.802);-webkit-text-stroke:0.15px currentColor;">EMPTY</div>
<div class="a" style="left:620.90px;top:223.50px;width:6.20px;height:6.00px;background:#3d6aa5;border-radius:2.2px;box-shadow:inset 0 0 0 0.8px #264a78"></div>
<div class="t" style="left:623.30px;top:225px;font-size:4.25px;color:#fff;font-weight:bold;transform:scaleX(0.776);">P</div>
<div class="t" style="left:629.00px;top:224px;font-size:5.5px;color:#fff;font-weight:bold;transform:scaleX(0.802);-webkit-text-stroke:0.15px currentColor;">EMPTY</div>
<div class="a" style="left:620.90px;top:234.16px;width:6.20px;height:6.00px;background:#3d6aa5;border-radius:2.2px;box-shadow:inset 0 0 0 0.8px #264a78"></div>
<div class="t" style="left:623.30px;top:236px;font-size:4.25px;color:#fff;font-weight:bold;transform:scaleX(0.665);">Q</div>
<div class="t" style="left:629.00px;top:235px;font-size:5.5px;color:#fff;font-weight:bold;transform:scaleX(0.802);-webkit-text-stroke:0.15px currentColor;">EMPTY</div>
<div class="a" style="left:620.90px;top:244.82px;width:6.20px;height:6.00px;background:#3d6aa5;border-radius:2.2px;box-shadow:inset 0 0 0 0.8px #264a78"></div>
<div class="t" style="left:623.30px;top:246px;font-size:4.25px;color:#fff;font-weight:bold;transform:scaleX(0.717);">R</div>
<div class="t" style="left:629.00px;top:245px;font-size:5.5px;color:#fff;font-weight:bold;transform:scaleX(0.802);-webkit-text-stroke:0.15px currentColor;">EMPTY</div>
<div class="a" style="left:620.90px;top:255.48px;width:6.20px;height:6.00px;background:#3d6aa5;border-radius:2.2px;box-shadow:inset 0 0 0 0.8px #264a78"></div>
<div class="t" style="left:623.30px;top:257px;font-size:4.25px;color:#fff;font-weight:bold;transform:scaleX(0.776);">S</div>
<div class="t" style="left:629.00px;top:256px;font-size:5.5px;color:#fff;font-weight:bold;transform:scaleX(0.802);-webkit-text-stroke:0.15px currentColor;">EMPTY</div>
<div class="a" style="left:620.90px;top:266.14px;width:6.20px;height:6.00px;background:#3d6aa5;border-radius:2.2px;box-shadow:inset 0 0 0 0.8px #264a78"></div>
<div class="t" style="left:623.30px;top:268px;font-size:4.25px;color:#fff;font-weight:bold;transform:scaleX(0.847);">T</div>
<div class="t" style="left:629.00px;top:267px;font-size:5.5px;color:#fff;font-weight:bold;transform:scaleX(0.802);-webkit-text-stroke:0.15px currentColor;">EMPTY</div>
<div class="a" style="left:620.90px;top:276.80px;width:6.20px;height:6.00px;background:#3d6aa5;border-radius:2.2px;box-shadow:inset 0 0 0 0.8px #264a78"></div>
<div class="t" style="left:623.30px;top:278px;font-size:4.25px;color:#fff;font-weight:bold;transform:scaleX(0.717);">U</div>
<div class="t" style="left:629.00px;top:277px;font-size:5.5px;color:#fff;font-weight:bold;transform:scaleX(0.802);-webkit-text-stroke:0.15px currentColor;">EMPTY</div>
<div class="a" style="left:620.90px;top:287.46px;width:6.20px;height:6.00px;background:#3d6aa5;border-radius:2.2px;box-shadow:inset 0 0 0 0.8px #264a78"></div>
<div class="t" style="left:623.30px;top:289px;font-size:4.25px;color:#fff;font-weight:bold;transform:scaleX(0.776);">V</div>
<div class="t" style="left:629.00px;top:288px;font-size:5.5px;color:#fff;font-weight:bold;transform:scaleX(0.802);-webkit-text-stroke:0.15px currentColor;">EMPTY</div>
<div class="t" style="left:620.70px;top:304px;font-size:6.0px;color:#fff;transform:scaleX(0.744);-webkit-text-stroke:0.2px currentColor;">Expr 1</div>
<div class="t" style="left:620.70px;top:315px;font-size:6.0px;color:#fff;transform:scaleX(0.744);-webkit-text-stroke:0.2px currentColor;">Expr 2</div>
<div class="t" style="left:620.70px;top:326px;font-size:6.0px;color:#fff;transform:scaleX(0.744);-webkit-text-stroke:0.2px currentColor;">Expr 3</div>
<div class="t" style="left:620.70px;top:336px;font-size:6.0px;color:#fff;transform:scaleX(0.744);-webkit-text-stroke:0.2px currentColor;">Expr 4</div>
<div class="a" style="left:78.00px;top:40.80px;width:302.50px;height:15.00px;background:#444;border-radius:2px"></div>
<div class="t" style="left:95.20px;top:44px;font-size:7.5px;color:#f2f2f2;transform:scaleX(0.897);-webkit-text-stroke:0.25px currentColor;">Copy</div>
<div class="t" style="left:144.30px;top:44px;font-size:7.5px;color:#f2f2f2;transform:scaleX(0.939);-webkit-text-stroke:0.25px currentColor;">Paste</div>
<div class="t" style="left:195.70px;top:44px;font-size:7.5px;color:#f2f2f2;transform:scaleX(0.933);-webkit-text-stroke:0.25px currentColor;">Swap</div>
<div class="t" style="left:247.00px;top:44px;font-size:7.5px;color:#f2f2f2;transform:scaleX(0.870);-webkit-text-stroke:0.25px currentColor;">Clear</div>
<div class="t" style="left:296.50px;top:44px;font-size:7.5px;color:#f2f2f2;transform:scaleX(0.920);-webkit-text-stroke:0.25px currentColor;">Undo</div>
<div class="t" style="left:346.60px;top:44px;font-size:7.5px;color:#f2f2f2;transform:scaleX(0.954);-webkit-text-stroke:0.25px currentColor;">Tools</div>
<div class="a" style="left:390.40px;top:40.80px;width:124.20px;height:15.00px;background:#444;border-radius:2px"></div>
<div class="t" style="left:401.90px;top:44px;font-size:7.5px;color:#f2f2f2;transform:scaleX(0.896);-webkit-text-stroke:0.25px currentColor;">Save to File</div>
<div class="t" style="left:459.30px;top:44px;font-size:7.5px;color:#f2f2f2;transform:scaleX(0.922);-webkit-text-stroke:0.25px currentColor;">Load from File</div>
<div class="a" style="left:525.00px;top:40.90px;width:79.00px;height:14.90px;background:#3a5e8a;border-radius:2px;box-shadow:0 0 0 0.6px #1a1a1a"></div>
<div class="t" style="left:546.30px;top:44px;font-size:7.5px;color:#f2f2f2;transform:scaleX(0.893);-webkit-text-stroke:0.25px currentColor;">Save Preset</div>
<div class="a" style="left:78.00px;top:60.00px;width:302.50px;height:15.70px;background:#444;border-radius:2px"></div>
<div class="t" style="left:110.00px;top:64px;font-size:7.25px;color:#f2f2f2;transform:scaleX(0.947);-webkit-text-stroke:0.25px currentColor;">Copy Multiple Messages</div>
<div class="t" style="left:248.30px;top:64px;font-size:7.25px;color:#f2f2f2;transform:scaleX(0.946);-webkit-text-stroke:0.25px currentColor;">Clear Multi Message Copy Buffer</div>
<div class="a" style="left:78.00px;top:80.40px;width:51.00px;height:15.40px;background:#434343;border-radius:1.5px 0 0 1.5px"></div>
<div class="a" style="left:129.00px;top:80.40px;width:117.00px;height:15.40px;background:#fff;border-radius:0 1.5px 1.5px 0"></div>
<div class="t" style="left:83.50px;top:84px;font-size:8.0px;color:#b4b4b4;transform:scaleX(0.855);-webkit-text-stroke:0.1px currentColor;">Short Name</div>
<div class="t" style="left:134.90px;top:84px;font-size:8.0px;color:#262626;transform:scaleX(0.796);-webkit-text-stroke:0.15px currentColor;">STRAT</div>
<div class="a" style="left:257.00px;top:80.40px;width:50.50px;height:15.40px;background:#434343;border-radius:1.5px 0 0 1.5px"></div>
<div class="a" style="left:307.50px;top:80.40px;width:117.00px;height:15.40px;background:#fff;border-radius:0 1.5px 1.5px 0"></div>
<div class="t" style="left:262.60px;top:84px;font-size:8.0px;color:#b4b4b4;transform:scaleX(0.857);-webkit-text-stroke:0.1px currentColor;">Toggle Name</div>
<div class="t" style="left:313.50px;top:84px;font-size:8.0px;color:#262626;transform:scaleX(0.815);-webkit-text-stroke:0.15px currentColor;">STRAT</div>
<div class="a" style="left:435.60px;top:80.40px;width:51.20px;height:15.40px;background:#434343;border-radius:1.5px 0 0 1.5px"></div>
<div class="a" style="left:486.80px;top:80.40px;width:116.80px;height:15.40px;background:#fff;border-radius:0 1.5px 1.5px 0"></div>
<div class="t" style="left:440.90px;top:84px;font-size:8.0px;color:#b4b4b4;transform:scaleX(0.856);-webkit-text-stroke:0.1px currentColor;">Long Name</div>
<div class="t" style="left:492.00px;top:84px;font-size:8.0px;color:#262626;transform:scaleX(0.816);-webkit-text-stroke:0.15px currentColor;">Fender Strat - DLX e VOX</div>
<div class="a" style="left:78.00px;top:99.80px;width:379.00px;height:12.80px;background:#14bd8e;border-radius:2px 0 0 2px"></div>
<div class="a" style="left:457.00px;top:99.80px;width:146.60px;height:12.80px;background:#444;border-radius:0 2px 2px 0"></div>
<div class="t" style="left:119.50px;top:104px;font-size:6.5px;color:#111;transform:scaleX(0.904);-webkit-text-stroke:0.25px currentColor;">Toggle Mode On</div>
<div class="t" style="left:244.40px;top:104px;font-size:6.5px;color:#111;transform:scaleX(0.895);-webkit-text-stroke:0.25px currentColor;">Preset Blink On</div>
<div class="t" style="left:367.00px;top:104px;font-size:6.5px;color:#111;transform:scaleX(0.901);-webkit-text-stroke:0.25px currentColor;">Message Scroll On</div>
<div class="t" style="left:498.30px;top:104px;font-size:6.5px;color:#f2f2f2;transform:scaleX(0.914);-webkit-text-stroke:0.25px currentColor;">Use Independent Toggle</div>
<div class="a" style="left:77.80px;top:117.30px;width:526.00px;height:305.70px;background:#2c2c2c;border-radius:2px 2px 0 0"></div>
<div class="a" style="left:77.80px;top:117.30px;width:526.00px;height:17.70px;background:#3b3b3b;border-radius:2px 2px 0 0"></div>
<div class="t" style="left:314.70px;top:123px;font-size:7.5px;color:#f2f2f2;transform:scaleX(0.909);-webkit-text-stroke:0.2px currentColor;">Preset Messages</div>
<div class="a" style="left:81.10px;top:142.20px;width:41.60px;height:15.80px;background:#3c3c3c;border-radius:2px"></div>
<div class="t" style="left:92.60px;top:147px;font-size:8.0px;color:#82f000;transform:scaleX(0.835);-webkit-text-stroke:0.2px currentColor;">Msg 1</div>
<div class="a" style="left:125.00px;top:142.20px;width:33.60px;height:15.80px;background:#3c3c3c;border-radius:2px 0 0 2px"></div>
<div class="t" style="left:129.90px;top:147px;font-size:8.0px;color:#82f000;transform:scaleX(0.904);-webkit-text-stroke:0.2px currentColor;">Action</div>
<div class="a" style="left:158.60px;top:142.20px;width:94.90px;height:15.80px;background:#fff;border-radius:0 1.5px 1.5px 0"></div>
<div class="t" style="left:163.80px;top:147px;font-size:7.5px;color:#262626;transform:scaleX(0.913);-webkit-text-stroke:0.15px currentColor;">Press</div>
<div class="a" style="left:255.60px;top:142.20px;width:32.80px;height:15.80px;background:#3c3c3c;border-radius:2px 0 0 2px"></div>
<div class="t" style="left:260.90px;top:147px;font-size:8.0px;color:#82f000;transform:scaleX(0.859);-webkit-text-stroke:0.2px currentColor;">Type</div>
<div class="a" style="left:288.40px;top:142.20px;width:95.10px;height:15.80px;background:#fff;border-radius:0 1.5px 1.5px 0"></div>
<div class="t" style="left:294.90px;top:147px;font-size:7.5px;color:#262626;transform:scaleX(0.889);-webkit-text-stroke:0.15px currentColor;">Program Change</div>
<div class="a" style="left:385.10px;top:142.20px;width:215.80px;height:15.80px;background:#3c3c3c;border-radius:2px"></div>
<div class="t" style="left:394.80px;top:147px;font-size:6.5px;color:#f0f0f0;transform:scaleX(0.859);-webkit-text-stroke:0.15px currentColor;">Pos: Both</div>
<div class="t" style="left:443.00px;top:147px;font-size:6.5px;color:#f0f0f0;transform:scaleX(0.818);-webkit-text-stroke:0.15px currentColor;">Clear</div>
<div class="t" style="left:485.70px;top:147px;font-size:6.5px;color:#f0f0f0;transform:scaleX(0.811);-webkit-text-stroke:0.15px currentColor;">Copy</div>
<div class="t" style="left:526.90px;top:147px;font-size:6.5px;color:#f0f0f0;transform:scaleX(0.860);-webkit-text-stroke:0.15px currentColor;">Paste</div>
<div class="a" style="left:575.5px;top:148.30px;width:0;height:0;border-left:2.5px solid transparent;border-right:2.5px solid transparent;border-top:2.8px solid #f0f0f0"></div>
<div class="a" style="left:85.00px;top:162.10px;width:512.00px;height:65.40px;background:#303030;border:1px solid #555;border-left:2.8px solid #e43ef2;border-radius:2px"></div>
<div class="a" style="left:87.80px;top:214.60px;width:508.20px;height:11.90px;background:#3c3c3c;"></div>
<svg class="a" style="left:570px;top:216.05px" width="22" height="10" viewBox="0 0 22 10"><path d="M2.6 8.4 L7.6 3.2" stroke="#eee" stroke-width="1.5" stroke-linecap="round"/><circle cx="15.6" cy="5" r="3.9" fill="#eee"/><path d="M14.2 3.6 L17 6.4 M17 3.6 L14.2 6.4" stroke="#3c3c3c" stroke-width="1"/></svg>
<div class="a" style="left:95.80px;top:177.40px;width:98.20px;height:8.70px;background:#3a5a82;border-radius:1.5px"></div>
<div class="t" style="left:124.10px;top:179px;font-size:6.0px;color:#fff;font-weight:bold;transform:scaleX(0.791);-webkit-text-stroke:0.15px currentColor;">Open User Library</div>
<div class="a" style="left:95.80px;top:190.80px;width:98.20px;height:8.70px;background:#3a5a82;border-radius:1.5px"></div>
<div class="t" style="left:122.70px;top:192px;font-size:6.0px;color:#fff;font-weight:bold;transform:scaleX(0.786);-webkit-text-stroke:0.15px currentColor;">Add to User Library</div>
<div class="t" style="left:200.90px;top:174px;font-size:5.5px;color:#c8c8c8;transform:scaleX(0.908);-webkit-text-stroke:0.12px currentColor;">PC Number</div>
<div class="t" style="left:200.90px;top:182px;font-size:7.75px;color:#f8f8f8;transform:scaleX(0.882);-webkit-text-stroke:0.2px currentColor;">10</div>
<div class="a" style="left:200.90px;top:192.10px;width:125.00px;height:1.00px;background:#8f8f8f;"></div>
<div class="a" style="left:320.90px;top:184.20px;width:0;height:0;border-left:2.3px solid transparent;border-right:2.3px solid transparent;border-top:2.5px solid #ddd"></div>
<div class="t" style="left:332.20px;top:174px;font-size:5.5px;color:#c8c8c8;transform:scaleX(0.916);-webkit-text-stroke:0.12px currentColor;">Send to all MIDI Channels</div>
<div class="t" style="left:332.20px;top:182px;font-size:7.75px;color:#f8f8f8;transform:scaleX(0.919);-webkit-text-stroke:0.2px currentColor;">No</div>
<div class="a" style="left:332.20px;top:192.10px;width:124.80px;height:1.00px;background:#8f8f8f;"></div>
<div class="a" style="left:452.00px;top:184.20px;width:0;height:0;border-left:2.3px solid transparent;border-right:2.3px solid transparent;border-top:2.5px solid #ddd"></div>
<div class="t" style="left:463.70px;top:174px;font-size:5.5px;color:#c8c8c8;transform:scaleX(0.919);-webkit-text-stroke:0.12px currentColor;">MIDI Channel</div>
<div class="t" style="left:463.70px;top:182px;font-size:7.75px;color:#f8f8f8;transform:scaleX(0.882);-webkit-text-stroke:0.2px currentColor;">8</div>
<div class="a" style="left:463.70px;top:192.10px;width:124.50px;height:1.00px;background:#8f8f8f;"></div>
<div class="a" style="left:583.20px;top:184.20px;width:0;height:0;border-left:2.3px solid transparent;border-right:2.3px solid transparent;border-top:2.5px solid #ddd"></div>
<div class="a" style="left:81.10px;top:236.80px;width:41.60px;height:15.80px;background:#3c3c3c;border-radius:2px"></div>
<div class="t" style="left:92.60px;top:241px;font-size:8.0px;color:#82f000;transform:scaleX(0.835);-webkit-text-stroke:0.2px currentColor;">Msg 2</div>
<div class="a" style="left:125.00px;top:236.80px;width:33.60px;height:15.80px;background:#3c3c3c;border-radius:2px 0 0 2px"></div>
<div class="t" style="left:129.90px;top:241px;font-size:8.0px;color:#82f000;transform:scaleX(0.904);-webkit-text-stroke:0.2px currentColor;">Action</div>
<div class="a" style="left:158.60px;top:236.80px;width:94.90px;height:15.80px;background:#fff;border-radius:0 1.5px 1.5px 0"></div>
<div class="t" style="left:163.80px;top:241px;font-size:7.5px;color:#262626;transform:scaleX(0.913);-webkit-text-stroke:0.15px currentColor;">Press</div>
<div class="a" style="left:255.60px;top:236.80px;width:32.80px;height:15.80px;background:#3c3c3c;border-radius:2px 0 0 2px"></div>
<div class="t" style="left:260.90px;top:241px;font-size:8.0px;color:#82f000;transform:scaleX(0.859);-webkit-text-stroke:0.2px currentColor;">Type</div>
<div class="a" style="left:288.40px;top:236.80px;width:95.10px;height:15.80px;background:#fff;border-radius:0 1.5px 1.5px 0"></div>
<div class="t" style="left:294.90px;top:241px;font-size:7.5px;color:#262626;transform:scaleX(0.897);-webkit-text-stroke:0.15px currentColor;">Control Change</div>
<div class="a" style="left:385.10px;top:236.80px;width:215.80px;height:15.80px;background:#3c3c3c;border-radius:2px"></div>
<div class="t" style="left:394.80px;top:242px;font-size:6.5px;color:#f0f0f0;transform:scaleX(0.859);-webkit-text-stroke:0.15px currentColor;">Pos: Both</div>
<div class="t" style="left:443.00px;top:242px;font-size:6.5px;color:#f0f0f0;transform:scaleX(0.818);-webkit-text-stroke:0.15px currentColor;">Clear</div>
<div class="t" style="left:485.70px;top:242px;font-size:6.5px;color:#f0f0f0;transform:scaleX(0.811);-webkit-text-stroke:0.15px currentColor;">Copy</div>
<div class="t" style="left:526.90px;top:242px;font-size:6.5px;color:#f0f0f0;transform:scaleX(0.860);-webkit-text-stroke:0.15px currentColor;">Paste</div>
<div class="a" style="left:575.5px;top:242.90px;width:0;height:0;border-left:2.5px solid transparent;border-right:2.5px solid transparent;border-top:2.8px solid #f0f0f0"></div>
<div class="a" style="left:85.00px;top:257.20px;width:512.00px;height:68.50px;background:#303030;border:1px solid #555;border-left:2.8px solid #e43ef2;border-radius:2px"></div>
<div class="a" style="left:87.80px;top:312.10px;width:508.20px;height:12.60px;background:#3c3c3c;"></div>
<svg class="a" style="left:570px;top:313.90px" width="22" height="10" viewBox="0 0 22 10"><path d="M2.6 8.4 L7.6 3.2" stroke="#eee" stroke-width="1.5" stroke-linecap="round"/><circle cx="15.6" cy="5" r="3.9" fill="#eee"/><path d="M14.2 3.6 L17 6.4 M17 3.6 L14.2 6.4" stroke="#3c3c3c" stroke-width="1"/></svg>
<div class="a" style="left:95.90px;top:269.70px;width:71.10px;height:8.30px;background:#3a5a82;border-radius:1.5px"></div>
<div class="t" style="left:106.70px;top:270px;font-size:6.0px;color:#fff;font-weight:bold;transform:scaleX(0.808);-webkit-text-stroke:0.15px currentColor;">Open MIDI Dictionary</div>
<div class="a" style="left:95.90px;top:279.90px;width:71.10px;height:8.30px;background:#3a5a82;border-radius:1.5px"></div>
<div class="t" style="left:110.70px;top:281px;font-size:6.0px;color:#fff;font-weight:bold;transform:scaleX(0.783);-webkit-text-stroke:0.15px currentColor;">Open User Library</div>
<div class="a" style="left:95.90px;top:290.40px;width:71.10px;height:8.30px;background:#3a5a82;border-radius:1.5px"></div>
<div class="t" style="left:108.90px;top:291px;font-size:6.0px;color:#fff;font-weight:bold;transform:scaleX(0.796);-webkit-text-stroke:0.15px currentColor;">Add to User Library</div>
<div class="t" style="left:173.70px;top:269px;font-size:5.5px;color:#c8c8c8;transform:scaleX(0.899);-webkit-text-stroke:0.12px currentColor;">CC Number</div>
<div class="t" style="left:173.70px;top:277px;font-size:7.75px;color:#f8f8f8;transform:scaleX(0.928);-webkit-text-stroke:0.2px currentColor;">30</div>
<div class="a" style="left:173.70px;top:287.00px;width:93.10px;height:1.00px;background:#8f8f8f;"></div>
<div class="a" style="left:261.80px;top:279.10px;width:0;height:0;border-left:2.3px solid transparent;border-right:2.3px solid transparent;border-top:2.5px solid #ddd"></div>
<div class="t" style="left:273.20px;top:269px;font-size:5.5px;color:#c8c8c8;transform:scaleX(0.865);-webkit-text-stroke:0.12px currentColor;">CC Value</div>
<div class="t" style="left:273.20px;top:277px;font-size:7.75px;color:#f8f8f8;transform:scaleX(0.936);-webkit-text-stroke:0.2px currentColor;">127</div>
<div class="a" style="left:273.20px;top:287.00px;width:92.80px;height:1.00px;background:#8f8f8f;"></div>
<div class="a" style="left:361.00px;top:279.10px;width:0;height:0;border-left:2.3px solid transparent;border-right:2.3px solid transparent;border-top:2.5px solid #ddd"></div>
<div class="t" style="left:373.00px;top:269px;font-size:5.5px;color:#c8c8c8;transform:scaleX(0.919);-webkit-text-stroke:0.12px currentColor;">MIDI Channel</div>
<div class="t" style="left:373.00px;top:277px;font-size:7.75px;color:#f8f8f8;transform:scaleX(0.882);-webkit-text-stroke:0.2px currentColor;">8</div>
<div class="a" style="left:373.00px;top:287.00px;width:93.10px;height:1.00px;background:#8f8f8f;"></div>
<div class="a" style="left:461.10px;top:279.10px;width:0;height:0;border-left:2.3px solid transparent;border-right:2.3px solid transparent;border-top:2.5px solid #ddd"></div>
<div class="a" style="left:480.80px;top:274.00px;width:15.30px;height:6.30px;background:#6f6f6f;border-radius:3.2px"></div>
<div class="a" style="left:480.60px;top:272.90px;width:8.40px;height:8.40px;background:#bdbdbd;border-radius:50%"></div>
<div class="t" style="left:499.60px;top:274px;font-size:7.75px;color:#f2f2f2;transform:scaleX(0.873);-webkit-text-stroke:0.2px currentColor;">Use value from Expression</div>
<div class="a" style="left:81.10px;top:334.20px;width:41.60px;height:15.80px;background:#3c3c3c;border-radius:2px"></div>
<div class="t" style="left:92.60px;top:339px;font-size:8.0px;color:#82f000;transform:scaleX(0.835);-webkit-text-stroke:0.2px currentColor;">Msg 3</div>
<div class="a" style="left:125.00px;top:334.20px;width:33.60px;height:15.80px;background:#3c3c3c;border-radius:2px 0 0 2px"></div>
<div class="t" style="left:129.90px;top:339px;font-size:8.0px;color:#82f000;transform:scaleX(0.904);-webkit-text-stroke:0.2px currentColor;">Action</div>
<div class="a" style="left:158.60px;top:334.20px;width:94.90px;height:15.80px;background:#fff;border-radius:0 1.5px 1.5px 0"></div>
<div class="t" style="left:163.80px;top:339px;font-size:7.5px;color:#262626;transform:scaleX(0.913);-webkit-text-stroke:0.15px currentColor;">Press</div>
<div class="a" style="left:255.60px;top:334.20px;width:32.80px;height:15.80px;background:#3c3c3c;border-radius:2px 0 0 2px"></div>
<div class="t" style="left:260.90px;top:339px;font-size:8.0px;color:#82f000;transform:scaleX(0.859);-webkit-text-stroke:0.2px currentColor;">Type</div>
<div class="a" style="left:288.40px;top:334.20px;width:95.10px;height:15.80px;background:#fff;border-radius:0 1.5px 1.5px 0"></div>
<div class="t" style="left:294.90px;top:339px;font-size:7.5px;color:#262626;transform:scaleX(0.897);-webkit-text-stroke:0.15px currentColor;">Control Change</div>
<div class="a" style="left:385.10px;top:334.20px;width:215.80px;height:15.80px;background:#3c3c3c;border-radius:2px"></div>
<div class="t" style="left:399.20px;top:339px;font-size:6.5px;color:#f0f0f0;transform:scaleX(0.830);-webkit-text-stroke:0.15px currentColor;">Pos: 2</div>
<div class="t" style="left:443.00px;top:339px;font-size:6.5px;color:#f0f0f0;transform:scaleX(0.818);-webkit-text-stroke:0.15px currentColor;">Clear</div>
<div class="t" style="left:485.70px;top:339px;font-size:6.5px;color:#f0f0f0;transform:scaleX(0.811);-webkit-text-stroke:0.15px currentColor;">Copy</div>
<div class="t" style="left:526.90px;top:339px;font-size:6.5px;color:#f0f0f0;transform:scaleX(0.860);-webkit-text-stroke:0.15px currentColor;">Paste</div>
<div class="a" style="left:575.5px;top:340.30px;width:0;height:0;border-left:2.5px solid transparent;border-right:2.5px solid transparent;border-top:2.8px solid #f0f0f0"></div>
<div class="a" style="left:85.00px;top:354.60px;width:512.00px;height:68.50px;background:#303030;border:1px solid #555;border-left:2.8px solid #e43ef2;border-radius:2px"></div>
<div class="a" style="left:87.80px;top:409.50px;width:508.20px;height:12.60px;background:#3c3c3c;"></div>
<svg class="a" style="left:570px;top:411.30px" width="22" height="10" viewBox="0 0 22 10"><path d="M2.6 8.4 L7.6 3.2" stroke="#eee" stroke-width="1.5" stroke-linecap="round"/><circle cx="15.6" cy="5" r="3.9" fill="#eee"/><path d="M14.2 3.6 L17 6.4 M17 3.6 L14.2 6.4" stroke="#3c3c3c" stroke-width="1"/></svg>
<div class="a" style="left:95.90px;top:367.10px;width:71.10px;height:8.30px;background:#3a5a82;border-radius:1.5px"></div>
<div class="t" style="left:106.70px;top:368px;font-size:6.0px;color:#fff;font-weight:bold;transform:scaleX(0.808);-webkit-text-stroke:0.15px currentColor;">Open MIDI Dictionary</div>
<div class="a" style="left:95.90px;top:377.30px;width:71.10px;height:8.30px;background:#3a5a82;border-radius:1.5px"></div>
<div class="t" style="left:110.70px;top:378px;font-size:6.0px;color:#fff;font-weight:bold;transform:scaleX(0.783);-webkit-text-stroke:0.15px currentColor;">Open User Library</div>
<div class="a" style="left:95.90px;top:387.80px;width:71.10px;height:8.30px;background:#3a5a82;border-radius:1.5px"></div>
<div class="t" style="left:108.90px;top:388px;font-size:6.0px;color:#fff;font-weight:bold;transform:scaleX(0.796);-webkit-text-stroke:0.15px currentColor;">Add to User Library</div>
<div class="t" style="left:173.70px;top:366px;font-size:5.5px;color:#c8c8c8;transform:scaleX(0.899);-webkit-text-stroke:0.12px currentColor;">CC Number</div>
<div class="t" style="left:173.70px;top:374px;font-size:7.75px;color:#f8f8f8;transform:scaleX(0.928);-webkit-text-stroke:0.2px currentColor;">30</div>
<div class="a" style="left:173.70px;top:384.40px;width:93.10px;height:1.00px;background:#8f8f8f;"></div>
<div class="a" style="left:261.80px;top:376.50px;width:0;height:0;border-left:2.3px solid transparent;border-right:2.3px solid transparent;border-top:2.5px solid #ddd"></div>
<div class="t" style="left:273.20px;top:366px;font-size:5.5px;color:#c8c8c8;transform:scaleX(0.865);-webkit-text-stroke:0.12px currentColor;">CC Value</div>
<div class="t" style="left:273.20px;top:374px;font-size:7.75px;color:#f8f8f8;transform:scaleX(0.905);-webkit-text-stroke:0.2px currentColor;">0</div>
<div class="a" style="left:273.20px;top:384.40px;width:92.80px;height:1.00px;background:#8f8f8f;"></div>
<div class="a" style="left:361.00px;top:376.50px;width:0;height:0;border-left:2.3px solid transparent;border-right:2.3px solid transparent;border-top:2.5px solid #ddd"></div>
<div class="t" style="left:373.00px;top:366px;font-size:5.5px;color:#c8c8c8;transform:scaleX(0.919);-webkit-text-stroke:0.12px currentColor;">MIDI Channel</div>
<div class="t" style="left:373.00px;top:374px;font-size:7.75px;color:#f8f8f8;transform:scaleX(0.882);-webkit-text-stroke:0.2px currentColor;">8</div>
<div class="a" style="left:373.00px;top:384.40px;width:93.10px;height:1.00px;background:#8f8f8f;"></div>
<div class="a" style="left:461.10px;top:376.50px;width:0;height:0;border-left:2.3px solid transparent;border-right:2.3px solid transparent;border-top:2.5px solid #ddd"></div>
<div class="a" style="left:480.80px;top:371.40px;width:15.30px;height:6.30px;background:#6f6f6f;border-radius:3.2px"></div>
<div class="a" style="left:480.60px;top:370.30px;width:8.40px;height:8.40px;background:#bdbdbd;border-radius:50%"></div>
<div class="t" style="left:499.60px;top:371px;font-size:7.75px;color:#f2f2f2;transform:scaleX(0.873);-webkit-text-stroke:0.2px currentColor;">Use value from Expression</div>
</body></html>
